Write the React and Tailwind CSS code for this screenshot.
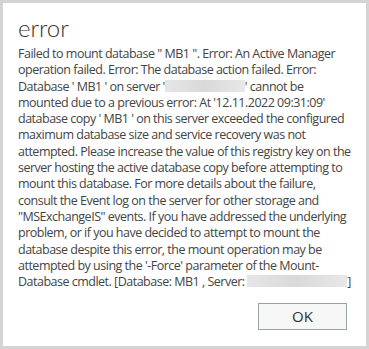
import React from 'react';

const Blur = ({ w }) => (
  <span
    className="inline-block h-[12px] align-[-1px] bg-gradient-to-r from-[#e6e6e6] via-[#d9d9d9] to-[#e8e8e8]"
    style={{ width: w }}
  />
);

const lines = [
  <>Failed to mount database " MB1 ". Error: An Active Manager</>,
  <>operation failed. Error: The database action failed. Error:</>,
  <>Database ' MB1 ' on server '<Blur w={80} />' cannot be</>,
  <>mounted due to a previous error: At '12.11.2022 09:31:09'</>,
  <>database copy ' MB1 ' on this server exceeded the configured</>,
  <>maximum database size and service recovery was not</>,
  <>attempted. Please increase the value of this registry key on the</>,
  <>server hosting the active database copy before attempting to</>,
  <>mount this database. For more details about the failure,</>,
  <>consult the Event log on the server for other storage and</>,
  <>"MSExchangeIS" events. If you have addressed the underlying</>,
  <>problem, or if you have decided to attempt to mount the</>,
  <>database despite this error, the mount operation may be</>,
  <>attempted by using the '-Force' parameter of the Mount-</>,
  <>Database cmdlet. [Database:  MB1 , Server: <Blur w={100} />]</>,
];

export default function App() {
  return (
    <div className="w-[369px] h-[349px] bg-white border-[3px] border-[#d4d4d4] flex flex-col font-['Open_Sans',sans-serif] text-[#444]">
      <div className="pl-[15px] pt-[10px] text-[24px] font-light font-['Lato',sans-serif] text-[#333] leading-[30px]">error</div>
      <div className="pl-[15px] pt-[3px] text-[12.5px] leading-[16.3px] tracking-[-0.5px] whitespace-nowrap">
        {lines.map((l, i) => (
          <div key={i}>{l}</div>
        ))}
      </div>
      <div className="mt-auto flex justify-end pr-[19px] pb-[16px]">
        <button className="w-[89px] h-[27px] border border-[#9aa3a3] bg-[#f7f7f7] text-[15px] text-[#333]">
          OK
        </button>
      </div>
    </div>
  );
}
